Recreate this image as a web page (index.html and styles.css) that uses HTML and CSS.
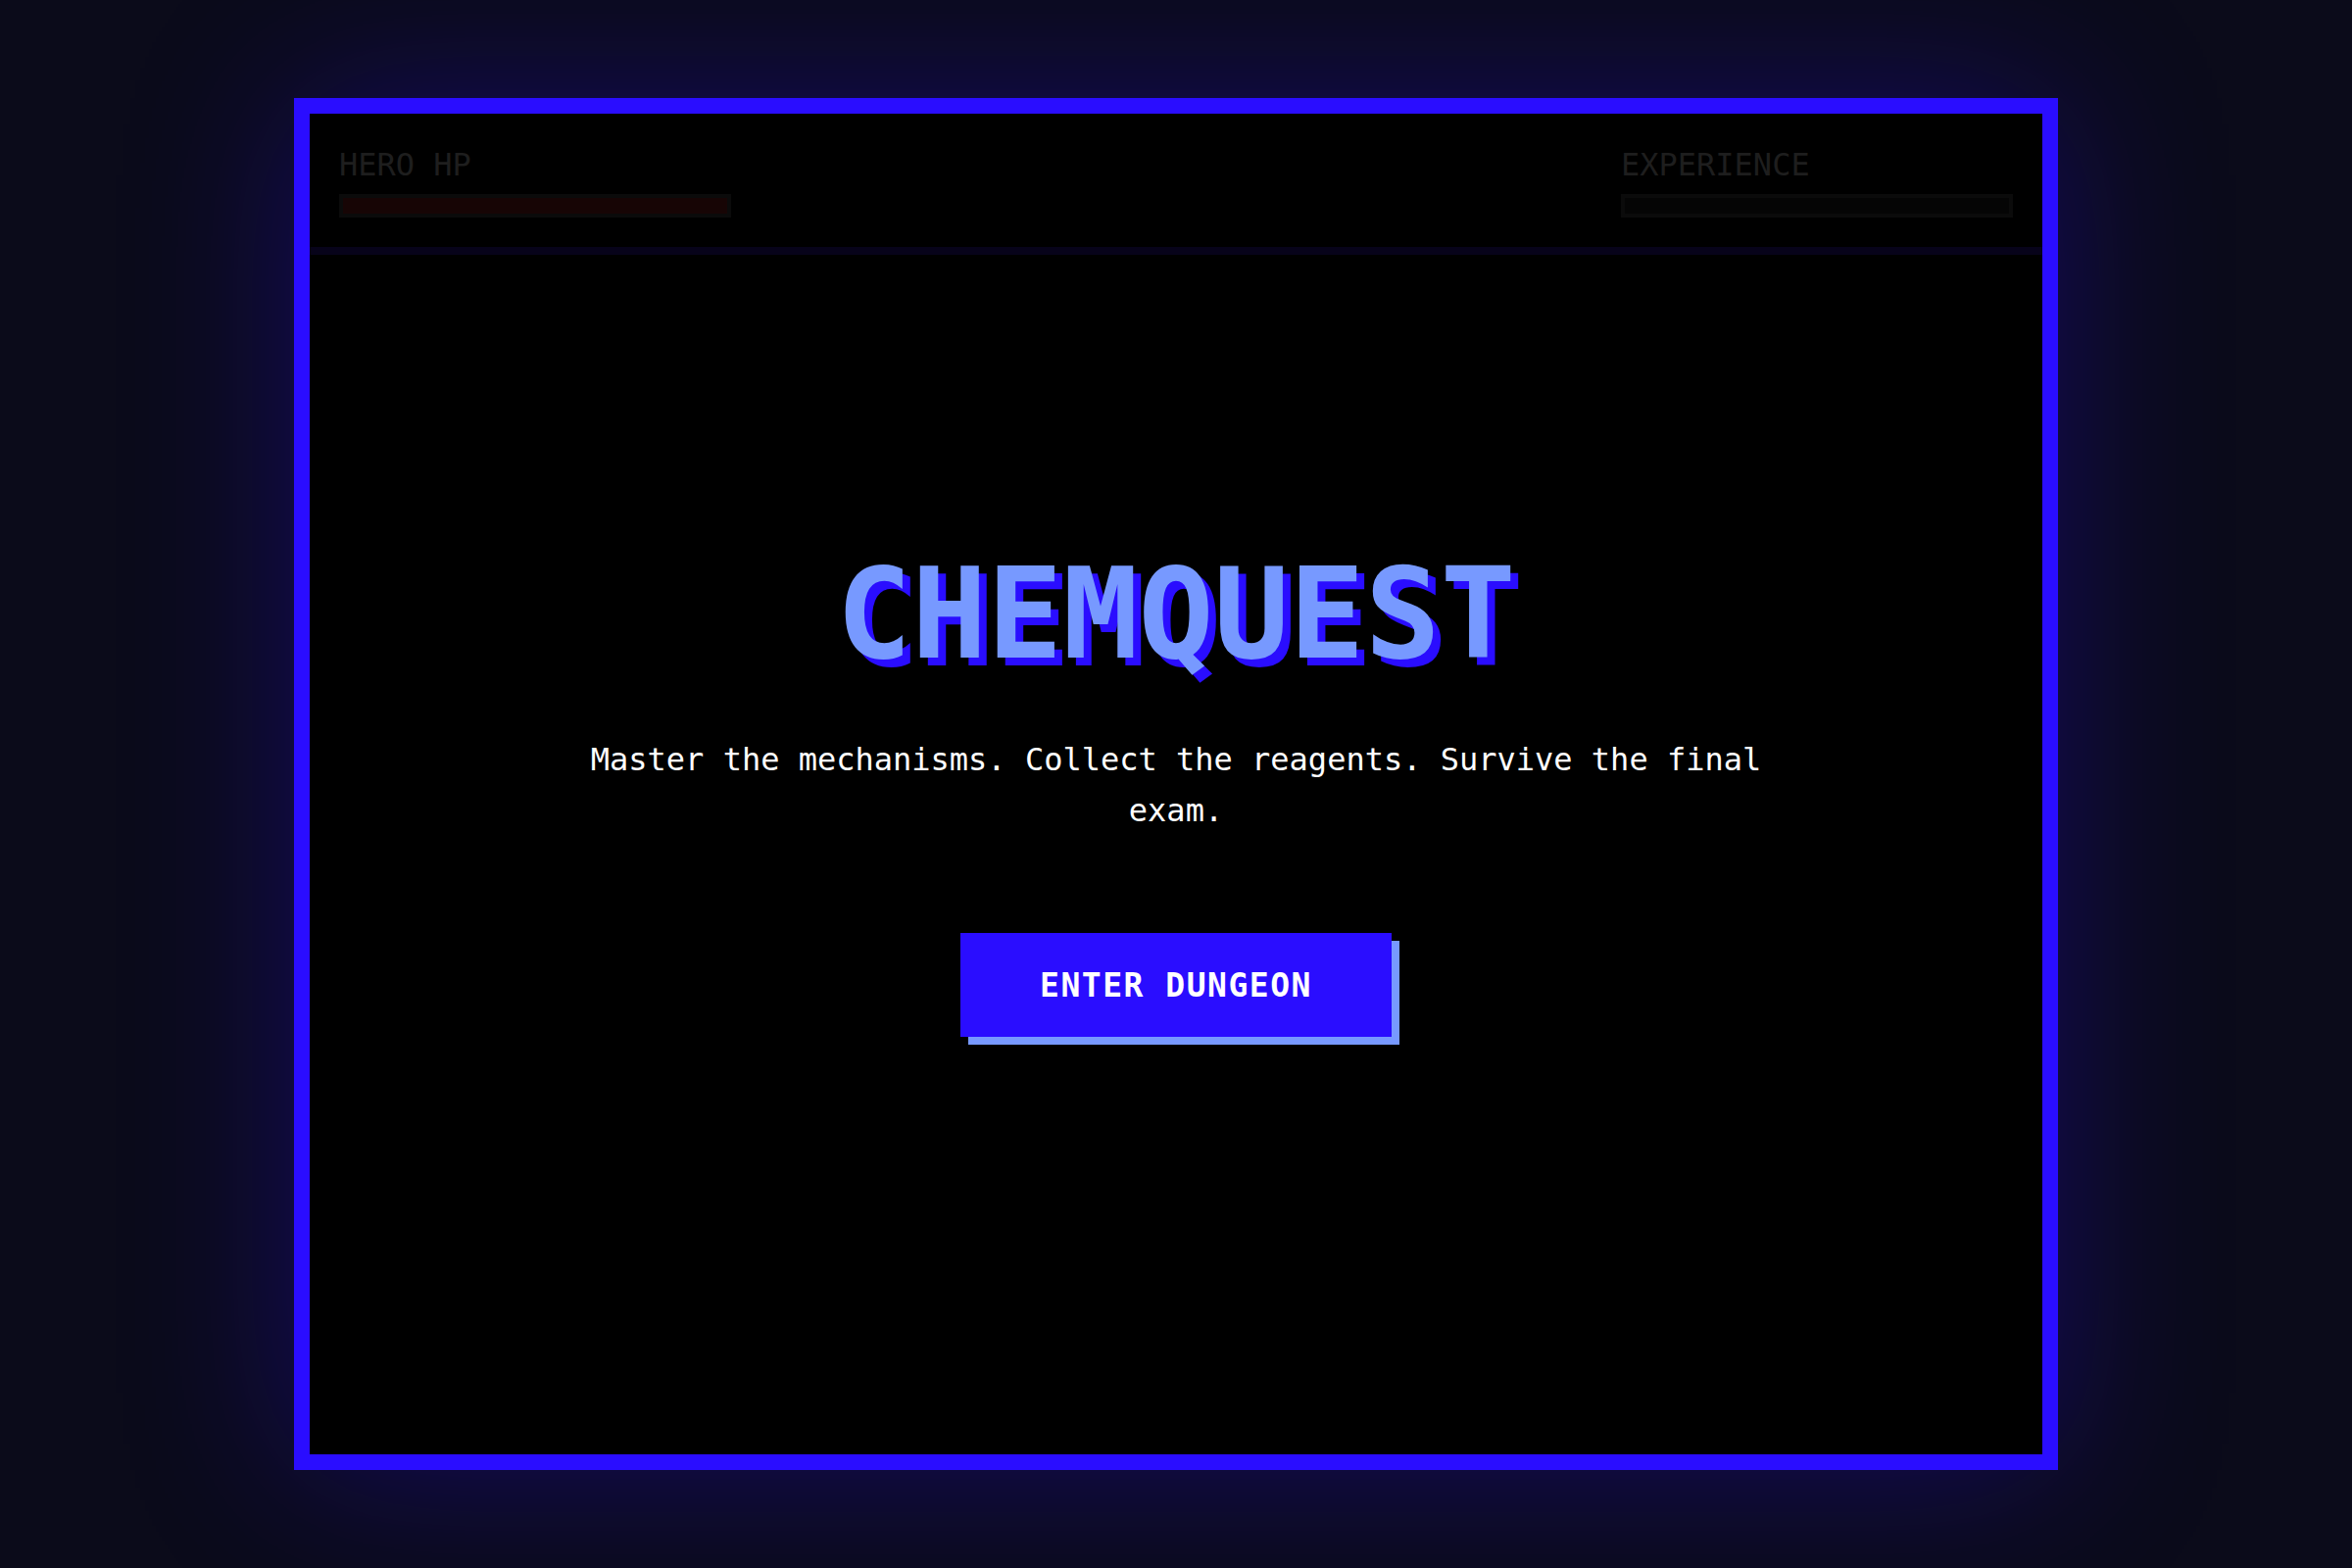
FILE: index.html
```html
<!DOCTYPE html>
<html lang="en">
<head>
  <meta charset="UTF-8" />
  <meta name="viewport" content="width=device-width, initial-scale=1.0"/>
  <title>ChemQuest</title>
  <link rel="stylesheet" href="styles.css">
</head>
<body>

  <div class="screen">
    <div class="hud">
      <div class="stat">
        <span class="stat-label">HERO HP</span>
        <div class="bar"><div class="bar-fill hp"></div></div>
      </div>
      <div class="stat">
        <span class="stat-label">EXPERIENCE</span>
        <div class="bar"><div class="bar-fill xp"></div></div>
      </div>
    </div>

    <div class="title-screen">
      <h1 class="logo">CHEMQUEST</h1>
      <p class="tagline">Master the mechanisms. Collect the reagents. Survive the final exam.</p>
      <button id="startBtn">ENTER DUNGEON</button>
    </div>
  </div>

</body>
</html>
```

FILE: styles.css
```css
body {
  margin: 0;
  padding: 0;
  height: 100vh;
  background: #0b0b1a;
  font-family: 'DejaVu Sans Mono', 'Liberation Mono', monospace;
  display: flex;
  align-items: center;
  justify-content: center;
}

.screen {
  width: 1800px;
  height: 1400px;
  box-sizing: border-box;
  background: #000;
  border: 16px solid #2a0dff;
  box-shadow: 0 0 160px rgba(42, 13, 255, 0.3);
  display: flex;
  flex-direction: column;
}

/* top status bar */
.hud {
  display: flex;
  justify-content: space-between;
  padding: 32px 30px 30px;
  border-bottom: 8px solid #07031a;
}

.stat {
  display: flex;
  flex-direction: column;
  gap: 10px;
}

.stat-label {
  font-size: 32px;
  line-height: 40px;
  color: #1e1e1e;
}

.bar {
  width: 400px;
  height: 24px;
  box-sizing: border-box;
  border: 4px solid #0b0b0b;
  background: #050505;
}

.bar-fill {
  height: 100%;
}

.bar-fill.hp {
  width: 100%;
  background: #170505;
}

.bar-fill.xp {
  width: 0;
}

/* title screen */
.title-screen {
  flex: 1;
  display: flex;
  flex-direction: column;
  align-items: center;
  padding-top: 303px;
}

.logo {
  margin: 0;
  font-size: 128px;
  line-height: 1;
  font-weight: bold;
  color: #7799ff;
  text-shadow: 8px 8px 0 #2a0dff;
}

.tagline {
  margin: 58px 0 0;
  max-width: 1200px;
  font-size: 32px;
  line-height: 52px;
  color: #fff;
  text-align: center;
}

button {
  margin-top: 99px;
  width: 440px;
  height: 106px;
  background-color: #2a0dff;
  color: #fff;
  border: none;
  font-family: inherit;
  font-size: 33px;
  font-weight: bold;
  letter-spacing: 1.5px;
  box-shadow: 8px 8px 0 #7799ff;
  cursor: pointer;
}

button:hover {
  background-color: #3a22ff;
}
```
